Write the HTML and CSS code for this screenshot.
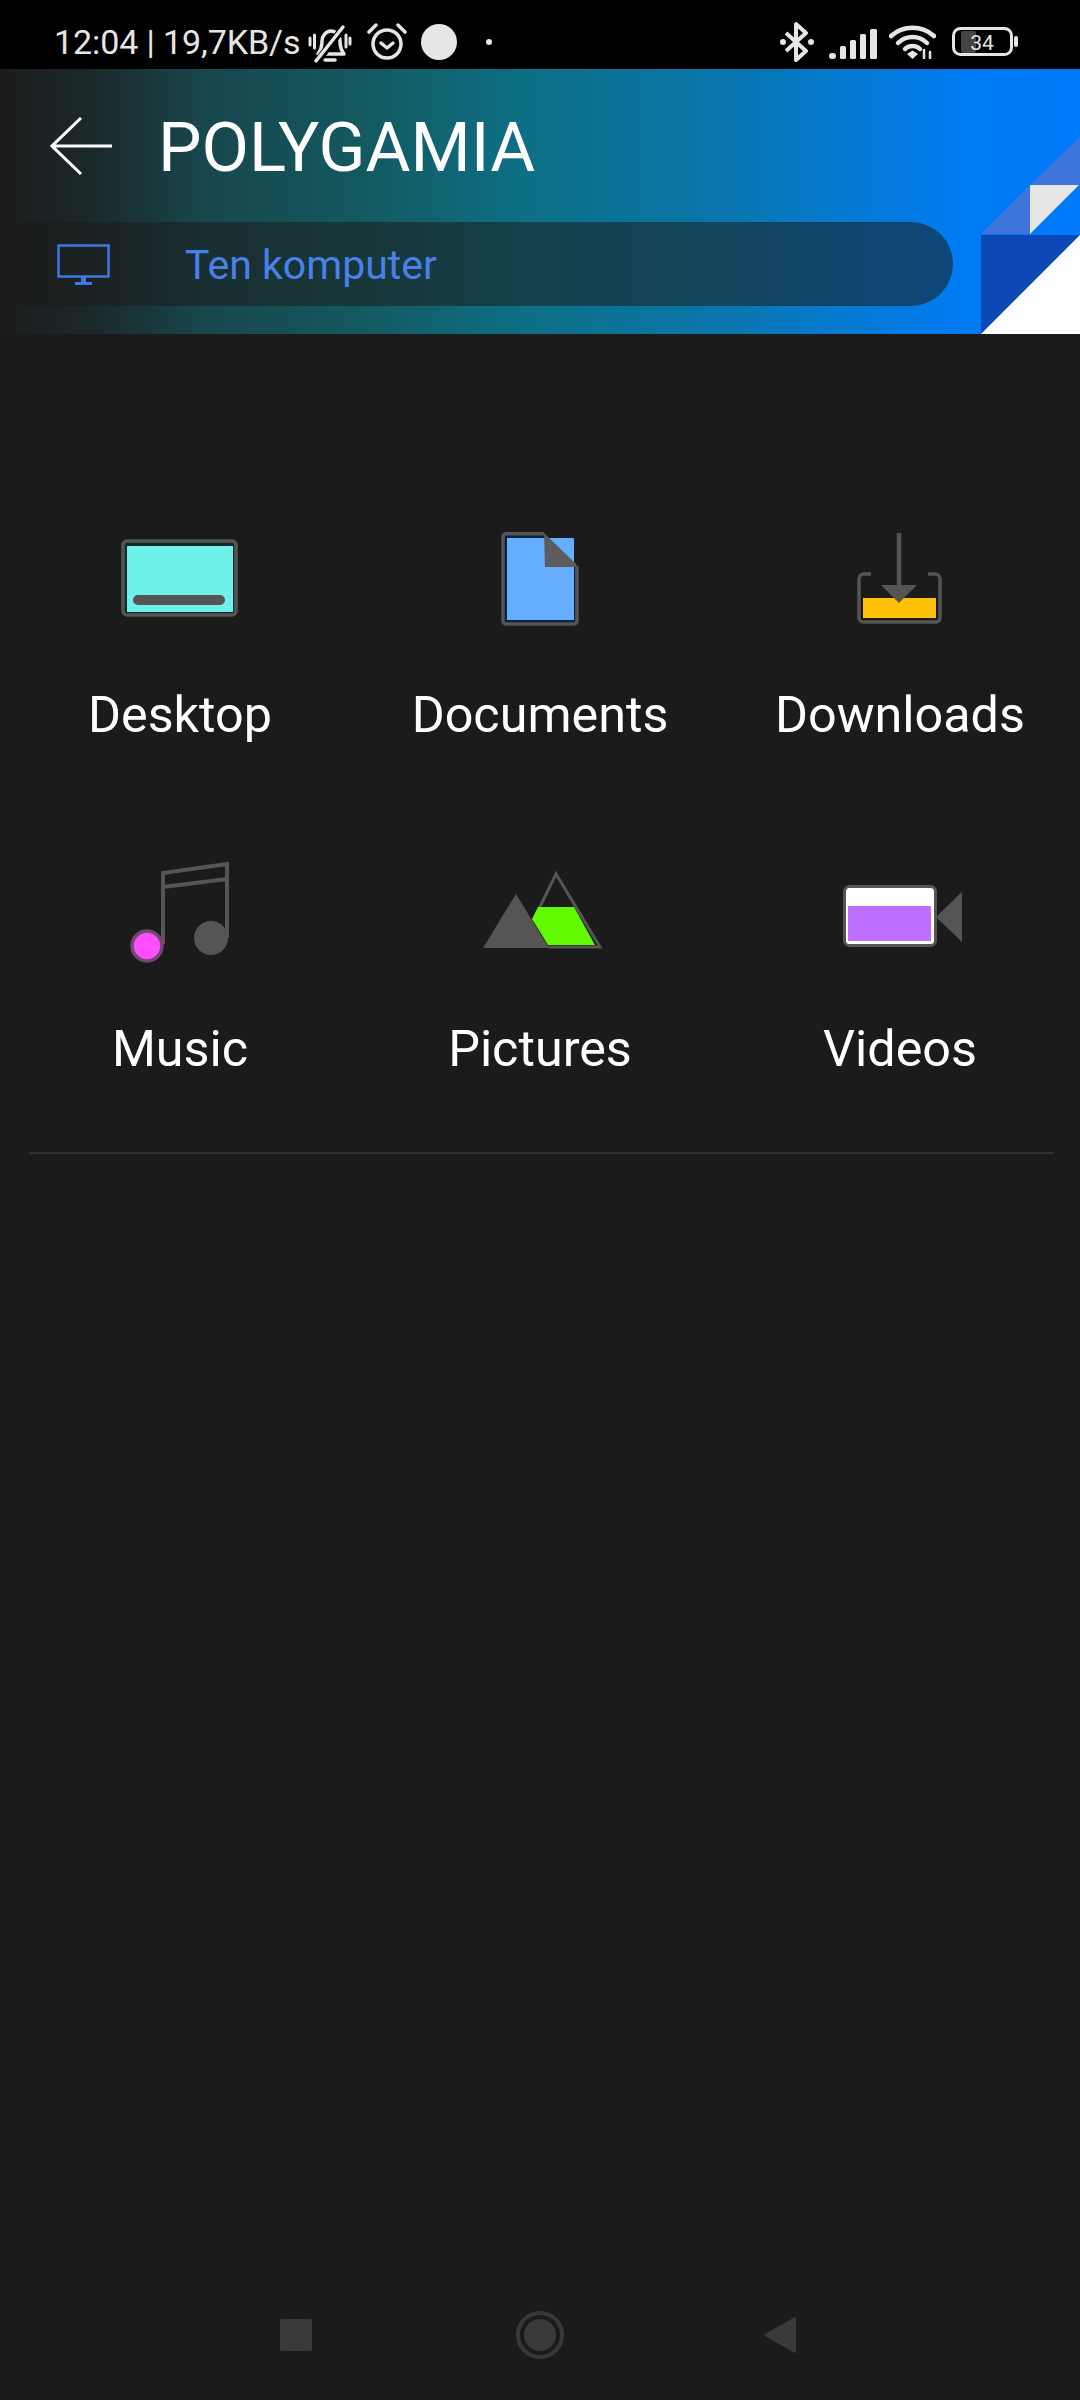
FILE: index.html
```html
<!DOCTYPE html>
<html lang="pl">
<head>
<meta charset="utf-8">
<title>POLYGAMIA</title>
<link rel="stylesheet" href="styles.css">
</head>
<body>
<div class="screen">
  <div class="status">
    <div class="status-group">
      <span class="status-text">12:04 | 19,7KB/s</span>
      <svg class="ic-bell" viewBox="0 0 44 40" fill="none" stroke="#e6e6e6" stroke-width="3.500" stroke-linecap="round" stroke-linejoin="round">
        <path d="M10 30c3-4 4-8 4-13 0-5 4-10 9-10s9 5 9 10c0 5 1 9 4 13z"/>
        <path d="M17 36h10"/>
        <path d="M11 35 36 3" stroke="#000" stroke-width="7"/>
        <path d="M8 37 35 3"/>
        <path d="M2 14v7M6.500 11v13M38 11v12M42 14v6" stroke-width="3"/>
      </svg>
      <svg class="ic-alarm" viewBox="0 0 40 38" fill="none" stroke="#e6e6e6" stroke-width="3.500" stroke-linecap="round" stroke-linejoin="round">
        <circle cx="20" cy="21" r="14"/>
        <path d="M14 20l6 5 6-5"/>
        <path d="M2 9 9 2M38 9l-7-7"/>
      </svg>
      <span class="status-circle"></span>
      <span class="status-dot"></span>
    </div>
    <div class="status-group status-right">
      <svg class="ic-bt" viewBox="0 0 36 40" fill="none" stroke="#e6e6e6" stroke-width="4" stroke-linejoin="round">
        <path d="M7 11 27 29 17 38V2l10 9L7 29"/>
        <circle cx="4" cy="20" r="3" fill="#e6e6e6" stroke="none"/>
        <circle cx="32" cy="20" r="3" fill="#e6e6e6" stroke="none"/>
      </svg>
      <svg class="ic-signal" viewBox="0 0 48 30" fill="#e6e6e6">
        <rect x="0" y="24" width="7" height="6" rx="3"/>
        <rect x="11" y="17" width="6" height="13" rx="1.500"/>
        <rect x="21" y="11" width="6" height="19" rx="1.500"/>
        <rect x="31" y="5" width="6" height="25" rx="1.500"/>
        <rect x="41" y="0" width="7" height="30" rx="1.500"/>
      </svg>
      <svg class="ic-wifi" viewBox="0 0 47 34" fill="none" stroke="#e6e6e6" stroke-width="4.500" stroke-linecap="round">
        <path d="M2 11C14 0 33 0 45 11"/>
        <path d="M9 18C17 10 30 10 38 18"/>
        <path d="M16 24C20 20 27 20 31 24"/>
        <path d="M18 29l5.500-3.500 5.500 3.500-5.500 5z" fill="#e6e6e6" stroke="none"/>
        <path d="M35 25v8M41 27v6" stroke-width="2.500"/>
      </svg>
      <svg class="ic-batt" viewBox="0 0 66 30">
        <rect x="9" y="4" width="15" height="22" rx="2" fill="#444"/>
        <rect x="1.500" y="1.500" width="58" height="26" rx="7" fill="none" stroke="#e6e6e6" stroke-width="3"/>
        <rect x="62" y="9" width="4" height="11" rx="2" fill="#e6e6e6"/>
        <text class="batt-text" x="30" y="22.500" text-anchor="middle">34</text>
      </svg>
    </div>
  </div>

  <header class="header">
    <svg class="corner" viewBox="0 0 99 197">
      <path d="M0 97 49 97 49 48 99 0V48H49Z" fill="#3f74dc"/>
      <path d="M49 48H98L49 97Z" fill="#e6e6e6"/>
      <path d="M0 98H99L0 197Z" fill="#0d47b5"/>
      <path d="M0 197 99 98V197Z" fill="#fff"/>
    </svg>
    <div class="title-row">
      <svg class="ic-back" viewBox="0 0 62 58" fill="none" stroke="#fff" stroke-width="3">
        <path d="M31 1 2 29l29 28M2 29h60"/>
      </svg>
      <h1 class="title">POLYGAMIA</h1>
    </div>
    <div class="crumb">
      <svg class="ic-pc" viewBox="0 0 53 41" fill="none" stroke="#3f78e6" stroke-width="2.500">
        <rect x="1.500" y="1.500" width="50" height="31"/>
        <path d="M26.500 33v5" stroke-width="5"/>
        <path d="M18 39.500h17" stroke-width="3"/>
      </svg>
      <span class="crumb-text">Ten komputer</span>
    </div>
  </header>

  <main class="grid">
    <div class="cell">
      <svg class="tile" viewBox="-5 0 130 104">
        <rect x="3" y="13" width="113" height="74" rx="4" fill="#0d2a2e" stroke="#555" stroke-width="3.500"/>
        <rect x="7" y="18" width="106" height="66" fill="#6ff0e8"/>
        <rect x="13" y="67" width="92" height="10" rx="5" fill="#555"/>
      </svg>
      <span class="label">Desktop</span>
    </div>
    <div class="cell">
      <svg class="tile" viewBox="-5 0 130 104">
        <path d="M64 5.700H26a3 3 0 0 0-3 3V93a3 3 0 0 0 3 3H94a3 3 0 0 0 3-3V38" fill="#0a2340" stroke="#555" stroke-width="3.500"/>
        <rect x="27" y="10" width="67" height="82" fill="#64adff"/>
        <path d="M64 5 97 37 95 39H65Z" fill="#5c5c5c"/>
      </svg>
      <span class="label">Documents</span>
    </div>
    <div class="cell">
      <svg class="tile" viewBox="-5 0 130 104">
        <path d="M31 46H24a5 5 0 0 0-5 5V90a4 4 0 0 0 4 4H96a4 4 0 0 0 4-4V51a5 5 0 0 0-5-5H88" fill="none" stroke="#555" stroke-width="3.500"/>
        <rect x="23" y="70" width="73" height="20" fill="#ffc107"/>
        <path d="M59 5V60" stroke="#555" stroke-width="4.500"/>
        <path d="M41 57H77L59 75Z" fill="#555"/>
      </svg>
      <span class="label">Downloads</span>
    </div>
    <div class="cell">
      <svg class="tile" viewBox="-5 0 130 104">
        <path d="M43 82V11L107 2V76M43 25 107 17" fill="none" stroke="#555" stroke-width="4"/>
        <circle cx="91" cy="76" r="17" fill="#555"/>
        <circle cx="27" cy="84" r="15" fill="#ff4dff" stroke="#6e4a6e" stroke-width="3.500"/>
      </svg>
      <span class="label">Music</span>
    </div>
    <div class="cell">
      <svg class="tile" viewBox="-5 0 130 104">
        <path d="M3 86 36 32 69 86Z" fill="#555"/>
        <path d="M53 59 76 12 120 85H68" fill="none" stroke="#555" stroke-width="3"/>
        <path d="M58 45H94L115 83H68L52 57Z" fill="#62fa00"/>
      </svg>
      <span class="label">Pictures</span>
    </div>
    <div class="cell">
      <svg class="tile" viewBox="-5 0 130 104">
        <rect x="4.500" y="24.500" width="91" height="59" rx="5" fill="#fff" stroke="#555" stroke-width="3"/>
        <rect x="8" y="44" width="83" height="35" fill="#bd70ff"/>
        <path d="M96 55 122 30V80Z" fill="#555"/>
      </svg>
      <span class="label">Videos</span>
    </div>
  </main>

  <hr class="divider">

  <nav class="nav">
    <span class="nav-square"></span>
    <span class="nav-home"><span class="nav-home-dot"></span></span>
    <svg class="nav-back" viewBox="0 0 32 36"><path d="M31 1V35L1 18Z" fill="#3a3a3a" stroke="#3a3a3a" stroke-width="2" stroke-linejoin="round"/></svg>
  </nav>
</div>
</body>
</html>
```

FILE: styles.css
```css
* { box-sizing: border-box; }
html, body { margin: 0; padding: 0; }
body { background: #1b1b1b; font-family: Roboto, "Noto Sans", sans-serif; color: #fff; }

.screen {
  width: 1080px;
  height: 2400px;
  display: flex;
  flex-direction: column;
  background: #1b1b1b;
  overflow: hidden;
}

.status {
  height: 69px;
  flex: none;
  background: #000;
  padding: 15px 62px 0 54px;
  display: flex;
  align-items: center;
  justify-content: space-between;
}
.status-group { display: flex; align-items: center; }
.status-text { font-size: 34px; color: #e6e6e6; letter-spacing: -0.1px; width: 254px; white-space: nowrap; }
.ic-bell { width: 44px; height: 40px; margin-top: 3px; }
.ic-alarm { width: 40px; height: 38px; margin-left: 15px; }
.status-circle { width: 36px; height: 36px; border-radius: 50%; background: #e6e6e6; margin-left: 14px; }
.status-dot { width: 6px; height: 6px; border-radius: 50%; background: #e6e6e6; margin-left: 29px; }
.ic-bt { width: 36px; height: 40px; }
.ic-signal { width: 48px; height: 30px; margin-left: 14px; margin-top: 3px; }
.ic-wifi { width: 47px; height: 34px; margin-left: 12px; }
.ic-batt { width: 66px; height: 30px; margin-left: 16px; }
.batt-text { font-family: Roboto, sans-serif; font-size: 21px; fill: #e6e6e6; }

.header {
  position: relative;
  height: 265px;
  flex: none;
  background: linear-gradient(90deg, #1c1c1c 0%, #1b2a2c 9%, #18474d 19%, #14585f 33%, #0d6f84 48%, #0a75a8 65%, #047ad6 80%, #007bf4 90%, #007afb 100%);
}
.corner { position: absolute; right: 0; bottom: 0; width: 99px; height: 197px; }
.title-row { height: 153px; display: flex; align-items: center; padding-left: 50px; }
.ic-back { width: 62px; height: 58px; }
.title { margin: 5px 0 0 46px; font-size: 69px; font-weight: 400; line-height: 80px; color: #fff; white-space: nowrap; }
.crumb {
  width: 953px;
  height: 84px;
  display: flex;
  align-items: center;
  padding-left: 57px;
  background: rgba(28, 28, 28, 0.55);
  border-radius: 0 42px 42px 0;
}
.ic-pc { width: 53px; height: 41px; }
.crumb-text { margin: 2px 0 0 75px; font-size: 41px; color: #4a80ea; white-space: nowrap; }

.grid {
  display: grid;
  grid-template-columns: repeat(3, 360px);
  row-gap: 119px;
  padding-top: 194px;
}
.cell { display: flex; flex-direction: column; align-items: center; }
.tile { width: 130px; height: 104px; display: block; }
.label { margin-top: 55px; height: 56px; line-height: 56px; font-size: 50.3px; color: #fff; white-space: nowrap; }

.divider {
  width: 1024px;
  height: 2px;
  margin: 75px 0 0 29px;
  border: 0;
  background: #303030;
  flex: none;
}

.nav {
  margin-top: auto;
  height: 130px;
  flex: none;
  display: grid;
  grid-template-columns: 32px 50px 32px;
  justify-content: center;
  column-gap: 205px;
  align-items: center;
}
.nav-square { width: 32px; height: 32px; border-radius: 2px; background: #3a3a3a; margin-left: 2px; }
.nav-home { width: 48px; height: 48px; margin-left: 1px; border-radius: 50%; border: 4px solid #383838; display: flex; align-items: center; justify-content: center; }
.nav-home-dot { width: 32px; height: 32px; border-radius: 50%; background: #3a3a3a; }
.nav-back { width: 32px; height: 36px; margin-left: -6px; }
```
